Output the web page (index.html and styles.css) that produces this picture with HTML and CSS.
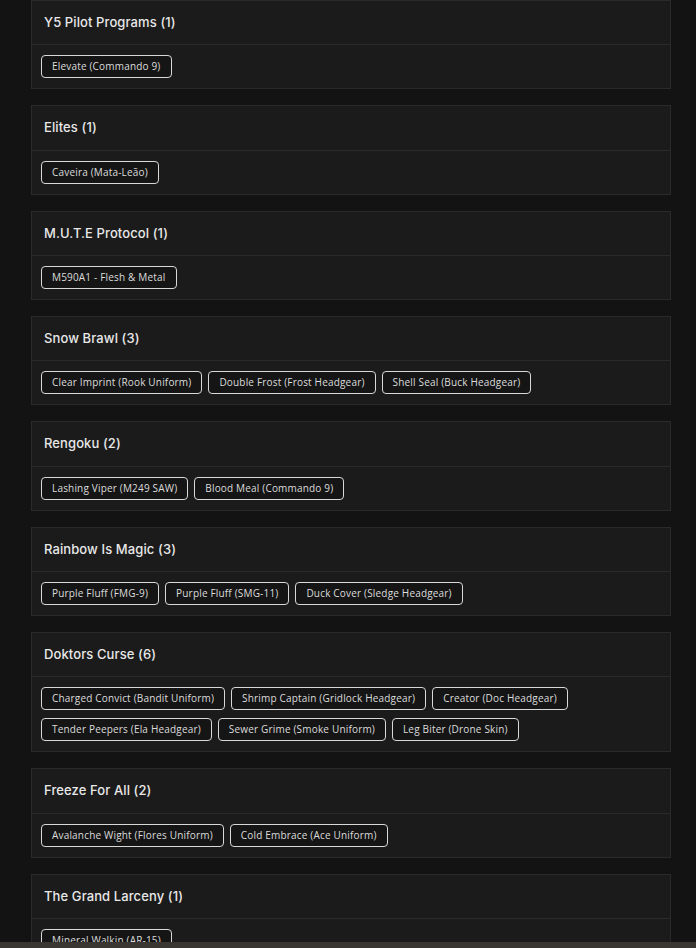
FILE: index.html
```html
<!DOCTYPE html>
<html>
<head>
<meta charset="utf-8">
<link rel="stylesheet" href="styles.css">
</head>
<body>
<main class="list">
  <section class="card">
    <h3 class="card-head">Y5 Pilot Programs (1)</h3>
    <div class="card-body"><span class="chip">Elevate (Commando 9)</span></div>
  </section>
  <section class="card">
    <h3 class="card-head">Elites (1)</h3>
    <div class="card-body"><span class="chip">Caveira (Mata-Leão)</span></div>
  </section>
  <section class="card">
    <h3 class="card-head">M.U.T.E Protocol (1)</h3>
    <div class="card-body"><span class="chip">M590A1 - Flesh &amp; Metal</span></div>
  </section>
  <section class="card">
    <h3 class="card-head">Snow Brawl (3)</h3>
    <div class="card-body">
      <span class="chip">Clear Imprint (Rook Uniform)</span>
      <span class="chip">Double Frost (Frost Headgear)</span>
      <span class="chip">Shell Seal (Buck Headgear)</span>
    </div>
  </section>
  <section class="card">
    <h3 class="card-head">Rengoku (2)</h3>
    <div class="card-body">
      <span class="chip">Lashing Viper (M249 SAW)</span>
      <span class="chip">Blood Meal (Commando 9)</span>
    </div>
  </section>
  <section class="card">
    <h3 class="card-head">Rainbow Is Magic (3)</h3>
    <div class="card-body">
      <span class="chip">Purple Fluff (FMG-9)</span>
      <span class="chip">Purple Fluff (SMG-11)</span>
      <span class="chip">Duck Cover (Sledge Headgear)</span>
    </div>
  </section>
  <section class="card">
    <h3 class="card-head">Doktors Curse (6)</h3>
    <div class="card-body">
      <span class="chip">Charged Convict (Bandit Uniform)</span>
      <span class="chip">Shrimp Captain (Gridlock Headgear)</span>
      <span class="chip">Creator (Doc Headgear)</span>
      <span class="chip">Tender Peepers (Ela Headgear)</span>
      <span class="chip">Sewer Grime (Smoke Uniform)</span>
      <span class="chip">Leg Biter (Drone Skin)</span>
    </div>
  </section>
  <section class="card">
    <h3 class="card-head">Freeze For All (2)</h3>
    <div class="card-body">
      <span class="chip">Avalanche Wight (Flores Uniform)</span>
      <span class="chip">Cold Embrace (Ace Uniform)</span>
    </div>
  </section>
  <section class="card">
    <h3 class="card-head">The Grand Larceny (1)</h3>
    <div class="card-body"><span class="chip">Mineral Walkin (AR-15)</span></div>
  </section>
</main>
<div class="bottom-bar"></div>
</body>
</html>
```
FILE: styles.css
```css
html, body {
  margin: 0;
  padding: 0;
  background: #131313;
  color: #e6e6e6;
  font-family: "Open Sans", "Liberation Sans", sans-serif;
  overflow: hidden;
  height: 948px;
}
.list {
  display: flex;
  flex-direction: column;
  gap: 16px;
  width: 640px;
  margin-left: 31px;
}
.card {
  background: #1b1b1b;
  border: 1px solid #2a2a2a;
}
.card-head {
  margin: 0;
  padding: 12px 12px;
  font-family: "Inter", "Open Sans", sans-serif;
  font-size: 13px;
  line-height: 19.33px;
  font-weight: 500;
  letter-spacing: 0.1px;
  color: #e8e8e8;
  border-bottom: 1px solid #2a2a2a;
}
.card-body {
  display: flex;
  flex-wrap: wrap;
  gap: 8px 6px;
  padding: 10px 9px;
}
.chip {
  display: inline-block;
  border: 1px solid #d8d8d8;
  border-radius: 4px;
  padding: 3px 10px;
  font-size: 10px;
  line-height: 15px;
  letter-spacing: 0.18px;
  color: #dcdcdc;
  background: #151515;
}
.bottom-bar {
  position: fixed;
  left: 0;
  right: 0;
  bottom: 0;
  height: 6px;
  background: #3a3632;
}
```
